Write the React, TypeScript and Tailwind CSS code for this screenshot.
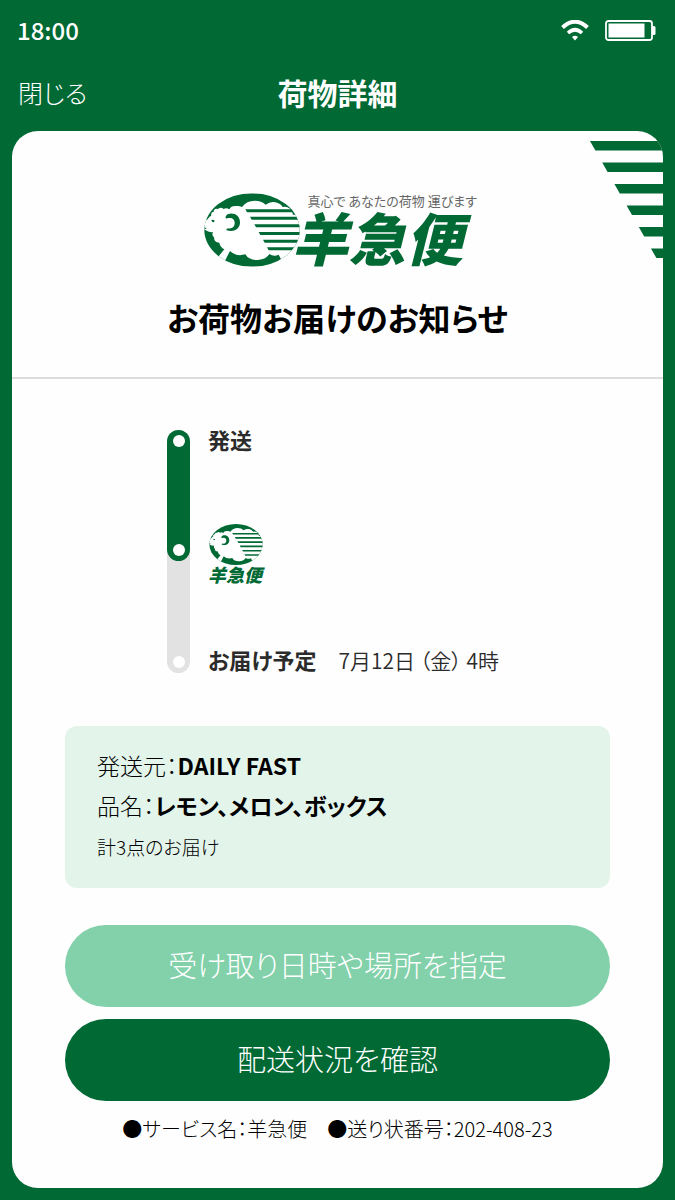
type EmblemProps = {
  className?: string;
};

const stripes = [
  { x: 140, y: 68, end: 282 },
  { x: 154, y: 90, end: 310 },
  { x: 167, y: 113, end: 310 },
  { x: 180, y: 136, end: 310 },
  { x: 193, y: 159, end: 310 },
  { x: 205, y: 182, end: 310 },
];

const cornerStripes = [0, 1, 2, 3, 4, 5];

const SheepEmblem = ({ className }: EmblemProps) => (
  <svg viewBox="16 20 288 220" className={className} aria-hidden="true">
    <clipPath id="emblem-oval">
      <ellipse cx="160" cy="130" rx="143" ry="110" />
    </clipPath>
    <g clipPath="url(#emblem-oval)">
      <rect x="16" y="20" width="288" height="220" fill="#006934" />
      <path
        d="M10 106 L20 103 Q29 97 32 91 Q35 88 38 87 Q35 76 45 75 Q46 64 58 67 Q66 60 75 67 Q83 62 92 68 Q96 57 113 58 Q122 57 130 61 Q144 42 168 42 Q189 42 201 54 Q214 44 230 47 Q246 50 252 61 Q264 58 274 66 Q282 73 283 84 L310 84 L310 190 L285 196 L262 207 L276 224 L258 238 L240 204 Q225 211 212 202 Q203 218 178 220 Q150 221 140 203 Q112 211 94 193 L76 228 L54 216 L77 188 Q64 181 62 168 Q46 168 46 152 Q38 145 43 136 Q30 138 20 130 L10 128 Z"
        fill="#fff"
      />
      {stripes.map((s) => (
        <path
          key={s.y}
          d={`M${s.x} ${s.y} H${s.end} V${s.y + 9} H${s.x + 5} Z`}
          fill="#006934"
        />
      ))}
      <path
        d="M87 83 C104 76 124 86 124 107 C124 128 105 139 82 130 L87 125 C101 128 109 119 108 107 C107 96 99 91 86 95 C78 98 80 87 87 83 Z"
        fill="#006934"
      />
      <path d="M38 100 Q44 98 48 102 Q46 108 41 106 Z" fill="#006934" />
      <path d="M16 121 L24 125 L18 128 Z" fill="#006934" />
    </g>
  </svg>
);

const WifiIcon = () => (
  <svg viewBox="0 0 28 21" className="h-[21px] w-7" fill="none" aria-hidden="true">
    <path d="M1.5 7.5 Q14 -4 26.500 7.500" stroke="#fff" strokeWidth="4" />
    <path d="M7 13 Q14 6.500 21 13" stroke="#fff" strokeWidth="3.600" />
    <path d="M11 17 Q14 14.500 17 17 L14 20.500 Z" fill="#fff" />
  </svg>
);

const BatteryIcon = () => (
  <svg viewBox="0 0 51 21" className="h-[21px] w-[51px]" aria-hidden="true">
    <rect x="1" y="1" width="46" height="19" rx="2.500" fill="none" stroke="#fff" strokeWidth="1.800" />
    <rect x="3.500" y="3.500" width="36" height="14" fill="#fff" />
    <path d="M47 6 H49 Q50.500 6 50.500 7.500 V13.500 Q50.500 15 49 15 H47 Z" fill="#fff" />
  </svg>
);

const CornerStripes = () => (
  <svg
    viewBox="0 0 73 118"
    className="absolute top-[10px] right-0 h-[118px] w-[73px]"
    aria-hidden="true"
  >
    {cornerStripes.map((i) => {
      const x = i * 12.2;
      const y = i * 21.5;
      return (
        <path
          key={i}
          d={`M${x} ${y} H73 V${y + 9.6} H${x + 5.4} Z`}
          fill="#006934"
        />
      );
    })}
  </svg>
);

const Timeline = () => (
  <div className="flex gap-[18px] pl-[155px] text-[22px] leading-[18px] text-[#2b2b2b]">
    <div className="flex w-[23px] flex-col rounded-full bg-[#e2e2e2]">
      <div className="flex h-[131px] flex-col items-center justify-between rounded-full bg-[#006934] py-[5px]">
        <span className="size-3 rounded-full bg-white" />
        <span className="size-3 rounded-full bg-white" />
      </div>
      <div className="flex h-28 flex-col items-center justify-end pb-[5px]">
        <span className="size-3 rounded-full bg-white" />
      </div>
    </div>
    <ol className="flex flex-col justify-between pb-1">
      <li className="font-bold">発送</li>
      <li className="w-14 pt-2">
        <SheepEmblem className="mx-auto h-[41px] w-[54px]" />
        <p className="text-[18px] leading-[18px] font-black whitespace-nowrap text-[#006934] italic">
          羊急便
        </p>
      </li>
      <li className="flex items-baseline gap-[22px]">
        <span className="font-bold">お届け予定</span>
        <time className="text-[21px] font-[350]">7月12日 （金） 4時</time>
      </li>
    </ol>
  </div>
);

const App = () => {
  return (
    <div className="flex min-h-screen flex-col bg-[#006934] px-3 pb-3 font-['Noto_Sans_CJK_JP',sans-serif] [font-feature-settings:'palt']">
      <div className="flex h-[60px] items-center justify-between pr-[7px] pl-[5px] text-white">
        <span className="text-2xl font-medium">18:00</span>
        <div className="flex items-center gap-4">
          <WifiIcon />
          <BatteryIcon />
        </div>
      </div>

      <header className="grid h-[71px] grid-cols-3 items-center px-1.5 pb-1.5 text-white">
        <button type="button" className="justify-self-start text-[25px] font-light">
          閉じる
        </button>
        <h1 className="text-center text-[30px] font-bold whitespace-nowrap">荷物詳細</h1>
      </header>

      <main className="relative flex-1 overflow-hidden rounded-[26px] bg-[#fefefe]">
        <CornerStripes />

        <section className="flex flex-col items-center border-b-2 border-[#dcdcdc] pt-[62px] pb-9">
          <div className="flex">
            <SheepEmblem className="h-[74px] w-24" />
            <div className="-ml-2 flex w-45 flex-col">
              <p className="pl-4 text-[13px] leading-4 whitespace-nowrap text-[#666]">
                真心で あなたの荷物 運びます
              </p>
              <p className="text-[57px] leading-[54px] font-black whitespace-nowrap text-[#006934] italic">
                羊急便
              </p>
            </div>
          </div>
          <h2 className="mt-[26px] text-[32px] leading-[48px] font-bold text-black">
            お荷物お届けのお知らせ
          </h2>
        </section>

        <section className="pt-[51px]">
          <Timeline />
        </section>

        <section className="mx-[53px] mt-[53px] rounded-xl bg-[#e3f4ea] px-8 pt-[19px] pb-[21px] text-[23px] leading-10 text-black">
          <p className="font-light">
            発送元：<strong className="font-bold">DAILY FAST</strong>
          </p>
          <p className="font-light">
            品名：<strong className="font-bold">レモン、メロン、ボックス</strong>
          </p>
          <p className="pt-0.5 text-[19px] font-light">計3点のお届け</p>
        </section>

        <div className="mx-[53px] mt-[37px] flex flex-col gap-3 text-[29px] font-light text-white">
          <button type="button" className="h-[82px] rounded-full bg-[#82d1aa] pb-0.5">
            受け取り日時や場所を指定
          </button>
          <button type="button" className="h-[82px] rounded-full bg-[#006934] pb-0.5">
            配送状況を確認
          </button>
        </div>

        <footer className="mt-3 flex justify-center gap-5 text-[20px] leading-8 font-light text-black">
          <span>●サービス名：羊急便</span>
          <span>●送り状番号：202-408-23</span>
        </footer>
      </main>
    </div>
  );
};

export default App;
